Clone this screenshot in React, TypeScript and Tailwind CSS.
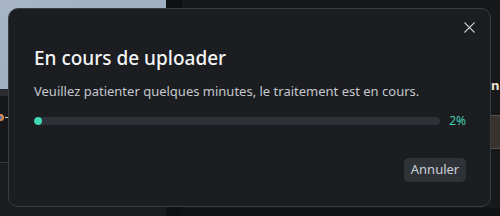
import React from "react";

export default function App() {
  return (
    <div
      className="relative w-[500px] h-[216px] overflow-hidden bg-[#17181b]"
      style={{ fontFamily: '"Noto Sans", "Open Sans", Arial, sans-serif' }}
    >
      {/* background page */}
      <div className="flex h-full">
        <div className="flex w-[166px] flex-col">
          <div className="h-[89px] bg-gradient-to-br from-[#a8b6c6] via-[#9fb0c2] to-[#8fa2b7]" />
          <div className="h-[7px] bg-[#2a2c30]" />
          <div className="mt-[6px] flex h-[30px] items-center gap-[1px]">
            <div className="ml-[-3px] h-[7px] w-[7px] rounded-full border-2 border-[#e08a3c] bg-[#3b6fd0]" />
            <div className="h-[1px] w-[4px] bg-[#d0d0d0]" />
          </div>
          <div className="mt-[30px] h-[1px] bg-[#34363a]" />
          <div className="flex-1 bg-[#1a1c1f]" />
        </div>
        <div className="w-[16px] bg-[#0f1011]" />
        <div className="flex flex-1 flex-col bg-[#17181a]">
          <div className="flex flex-1 justify-end">
            <div className="flex w-[9px] flex-col overflow-hidden">
              <div className="mt-[78px] whitespace-nowrap text-[13px] font-bold leading-[14px] text-[#f1e6d4]">na</div>
              <div className="mt-[23px] h-[34px] border-y border-[#5a5244] bg-[#38342d]" />
            </div>
          </div>
          <div className="h-[8px] bg-[#111213]" />
        </div>
      </div>

      {/* modal */}
      <div className="absolute left-[8px] top-[8px] flex h-[199px] w-[483px] flex-col rounded-[10px] border border-[#3a3d43] bg-[#1b1d20] pl-[25px] pr-[24px]">
        <button className="absolute right-[15px] top-[12px] flex h-[12px] w-[12px] items-center justify-center text-[#d4d6da]">
          <svg width="11" height="11" viewBox="0 0 11 11" fill="none" stroke="currentColor" strokeWidth="1.2" strokeLinecap="round">
            <path d="M0.8 0.8 L10.2 10.2 M10.2 0.8 L0.8 10.2" />
          </svg>
        </button>
        <h2 className="mt-[37px] text-[19px] font-medium leading-[24px] text-[#f3f4f6]">En cours de uploader</h2>
        <p className="mt-[11px] text-[13px] leading-[20px] text-[#c3c7ce]">
          Veuillez patienter quelques minutes, le traitement est en cours.
        </p>
        <div className="mt-[16px] flex h-[8px] items-center">
          <div className="h-[8px] flex-1 overflow-hidden rounded-full bg-[#2e3138]">
            <div className="h-full rounded-full bg-[#3fd9b4]" style={{ width: "2%" }} />
          </div>
          <span className="ml-[9px] text-[12px] leading-[8px] text-[#3fcfae]">2%</span>
        </div>
        <div className="mt-[33px] flex justify-end">
          <button className="flex h-[24px] w-[62px] items-center justify-center rounded-[5px] bg-[#2f3237] text-[13px] text-[#cdd1d7]">
            Annuler
          </button>
        </div>
      </div>
    </div>
  );
}
